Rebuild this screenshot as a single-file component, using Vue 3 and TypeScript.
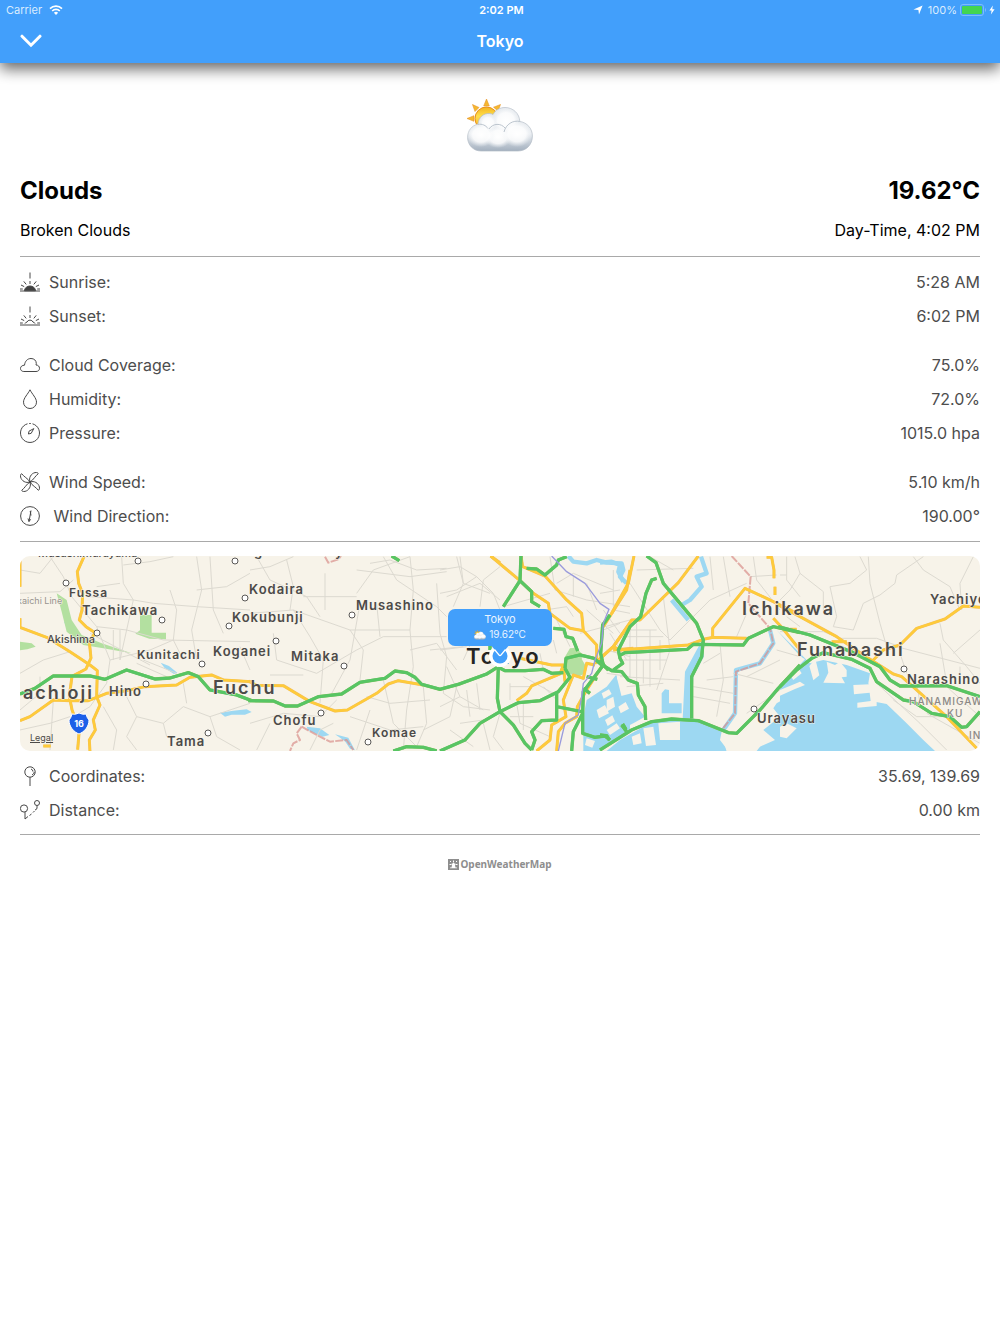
<script setup lang="ts">
interface Reading {
  icon: string
  label: string
  value: string
}

interface Tile {
  x: number
  y: number
  water?: string
  river?: string
  land?: string
  park?: string
  minor?: string
  border?: string
  major?: string
  highway?: string
  rail?: string
}

interface Place {
  name: string
  x: number
  y: number
  kind: 'city' | 'town' | 'village' | 'hamlet' | 'ward' | 'line' | 'capital'
}

const conditionGroups: Reading[][] = [
  [
    { icon: 'sunrise', label: 'Sunrise:', value: '5:28 AM' },
    { icon: 'sunset', label: 'Sunset:', value: '6:02 PM' },
  ],
  [
    { icon: 'cloud', label: 'Cloud Coverage:', value: '75.0%' },
    { icon: 'drop', label: 'Humidity:', value: '72.0%' },
    { icon: 'gauge', label: 'Pressure:', value: '1015.0 hpa' },
  ],
  [
    { icon: 'fan', label: 'Wind Speed:', value: '5.10 km/h' },
    { icon: 'compass', label: '\u00a0Wind Direction:', value: '190.00°' },
  ],
]

const locationGroups: Reading[][] = [
  [
    { icon: 'pin', label: 'Coordinates:', value: '35.69, 139.69' },
    { icon: 'route', label: 'Distance:', value: '0.00 km' },
  ],
]

// Tile geometry is drawn at three units per map pixel.
const tiles: Tile[] = [
  {
    x: 10,
    y: 550,
    water: 'M162 215l20 5 20 42-25-17zM452 338l25 10 25 20-10 4-28-18zM630 488l40-6 40-4 15 8-20 8-40 0-20 6z',
    park: 'M390 195h35v53h43v20l-50-2-42-15 14-10zM140 130l30 20 15 60 30 45 60 25 90 30-85-15-60-10-50-40-15-60zM30 275l35 5 12 10-25 8-22 3z',
    minor:
      'M30 130L150 125 190 90M120 20L160 80 185 140 260 230 300 330 290 400 240 470 190 500M30 60L90 70 130 20M335 20L340 100 370 150 350 240 330 330M340 45L420 35 490 20M370 150L430 160 560 170 720 180M480 120L500 180 490 270 520 330M560 20L575 120 545 240 560 330M600 20L610 180 640 250M240 140L370 150M260 230L350 240 460 270 720 275M30 370L100 330 180 305M300 330L420 300 490 270M310 240V330M330 240V330M240 250L420 345M380 340L470 380M400 330L500 370M350 440L380 500 460 520 520 470 600 500 720 460M280 470L320 540 310 600M380 500L350 560 380 600M460 520L470 560M600 500L620 560 690 600M30 480L90 430 90 380M30 540L120 520 180 500M130 450L120 600M520 400L530 460M690 290L720 360M260 110L330 100M720 70L650 110 560 120',
    major:
      'M222 20L202 65l4 35 12 30-2 50-8 30 20 20 27 18-17 28 5 48-15 33-42 22-8 60 8 40 22 60-5 60M30 205V232L110 262 180 305 240 345 262 362 260 440 270 465 250 510 256 540 238 570 240 605M30 20V110M30 512L60 500 130 450 180 452 235 452 290 430 350 422 405 410 500 405 540 382 605 375 640 390 725 395M100 588h22',
    highway: 'M30 432L75 415 130 378 240 378 285 388 350 360 435 387 480 384 535 368 565 380 600 420 680 435 725 452',
  },
  {
    x: 250,
    y: 550,
    water: 'M170 530l40 5 28 20-20 5-45-20zM255 553l40 10 20 38-15-5-15-22z',
    border: 'M155 530L140 550 150 570 130 580 120 603M155 530L200 555 240 575 290 570 310 600M225 20l10 18 30-10 8-10',
    minor:
      'M0 60L60 50 130 20M20 20L60 90 170 140 210 200M110 30L130 110 120 180M160 140H320M225 70V180M320 130L370 60 480 20M320 60L480 80 590 65M480 20L490 120 480 240 490 350 470 480 460 600M300 240L340 300 330 390M400 20L440 90 560 170 590 200M360 40L420 30 500 60 590 55M0 190L130 180 300 240 480 240M70 250L80 330 200 370 320 300 400 260 590 260M130 180L180 260 220 330 210 460M60 375H160M330 160L300 330 240 440M380 160L390 260M560 100L570 250 590 320 580 430M620 20L640 100 720 130M590 140L690 100 750 150M540 300L640 290M620 360L560 280 480 300M350 440L420 460 540 450M400 390L430 520 500 590M520 410L530 520 500 590M580 430L640 470 720 480M620 410L600 500 520 540M0 520L100 490 210 500 260 450M20 600L60 520M180 600L210 540 250 520M320 600L360 480M300 500L420 540 520 530M650 420L660 500M680 400L690 480M690 220L640 330',
    major: 'M-5 393L20 406 100 407 180 455 255 483 292 480 380 430 415 402 445 392 520 405M722 18L750 38',
    highway:
      'M-5 452L70 453 105 468 143 468 205 440 275 432 330 397 405 385 435 363 470 368 495 382 515 403 570 418 625 403 710 372 742 352M430 603L470 590 520 592 560 603M425 18L448 32',
  },
  {
    x: 440,
    y: 550,
    water: 'M528 375L535 400 545 440 535 460 570 450V545L520 575 480 603H430V500L440 450 500 410z',
    river: 'M385 18L400 35 440 40 470 30 500 38 545 40 550 60 540 80 560 100',
    land: 'M470 480l25-15 12 25-30 15zM500 540l30-20 10 15-30 20zM485 430l22-12 8 14-24 14zM440 565l25 8-8 20-22-8z',
    park: 'M375 320l15-25 18-2 22 22-5 12 12 20-5 25-20 10-38-18z',
    minor:
      'M0 60L60 50 110 80 160 130 180 180M0 130L50 120 110 80M60 20L70 100 40 170M180 50L130 90 120 170M190 170L330 130M330 20L345 120 440 150 570 170M250 190L380 170 400 200M350 100L400 70 520 120M400 80V140M440 100L470 180M520 60V170M345 200L390 290M420 250L570 210M510 250L560 330M500 300L570 320M0 300L80 290M20 350L60 440 130 480M0 470L60 440M60 520L130 510M210 400V450M210 410H270M230 460L240 520 330 560M250 460V540M210 500H280M250 380L340 430M300 310L310 360M340 270L350 310M30 540L100 590M130 520L150 600M180 490L160 560 190 600M310 410L350 450M500 370L570 380M520 180L570 190M440 180L520 250',
    major:
      'M152 18L240 92 280 130 325 160 330 190 390 235 430 242M243 18L248 50 315 78 380 150 425 190 430 242 470 285 470 340M240 325L335 345 370 345M230 452L260 430 275 408 360 372 370 345 375 395M465 345L440 340 430 385 400 375 370 450 378 500 335 525 330 570 290 603M485 350L440 420 412 470 410 500 375 520 355 545 350 603M570 60L560 120 490 230M465 340L520 290 570 220M520 300L580 295',
    highway:
      'M243 18L240 92 190 170M240 92L275 125 275 155 300 170M340 235L372 238 378 260 398 265 413 303M260 55L290 57 315 75 350 45 355 30 380 20M375 355L378 325 420 315 462 325 485 345M375 355L390 382 355 425 300 452 235 458 180 485 120 520 75 570 0 603M175 352L172 445 180 485 220 525 255 580 275 600M175 352L195 362 255 362 310 358 335 370 370 368M350 425L350 510 305 512 275 545 285 570 275 600M350 470L425 485M510 195L488 225 482 310 490 345 430 425 428 490 400 545 395 603M428 490V550L465 562 495 558 510 570M490 345L505 360M440 380L472 388M430 415l20 15M150 285v15M545 525l15 20',
    rail: 'M335 18L380 65 435 100 480 160 507 178 490 220 485 280 465 330 455 370 430 400 425 440 415 495 375 520 355 603',
  },
  {
    x: 600,
    y: 550,
    water:
      'M20 603L60 570 130 530 165 515 280 505 330 530 365 545 360 570 385 603zM248 508L255 365 290 300 312 262 312 320 280 380 275 508zM600 420L530 460 520 475 540 500 490 540 525 570 480 590 470 603H600zM30 410L50 375 55 440 95 430 110 470 135 500 100 520 60 540 20 560 0 580V450zM185 430l10-12 12 2v40l38 0v30h-60z',
    river: 'M0 38L35 35 60 45 55 65 70 95M303 20L320 70 290 80 305 110 270 150 245 165M215 150L265 210M510 240L520 280 480 340 408 360 405 490 370 540',
    land: 'M175 520l65-5v55h-60zM130 535l30-5 8 55-30 3zM20 450l20-10 5 30-25 15zM55 470l22-14 10 20-25 14zM95 560l25-10 5 30-25 5zM15 510l22-14 8 18-22 14zM370 570l15-10 15 15-8 30h-12zM400 560l20 40h20l-15-45z',
    border: 'M395 18L452 80 445 160 510 235 520 280 480 340 408 365 405 490 365 540',
    minor:
      'M110 60L280 55M90 100L180 240 210 270M70 240H170M70 260H190M70 330H200M90 230V400M110 220V400M130 330V400M150 240V410M180 270V360M60 380L240 390M80 410L190 400M190 140L210 300 170 420M210 270L330 150 440 100M330 20L340 120M370 20L390 140M450 80L530 75M440 190L410 260M360 280L370 390 350 500M280 410L400 430M280 440L390 460M400 370L520 400M440 380L540 330M460 20L470 90 540 180M560 20V90L600 140M220 60L150 20M310 340L360 310M320 390L400 380M440 490L540 420M0 130L60 120M10 240L60 220M10 180L60 250M560 200L600 230M530 300L600 320',
    major:
      'M102 18L85 100 35 190M295 18L235 98 120 210 95 210 40 290 0 325M60 300L265 285 310 268 340 262 440 265M338 262V235L435 115 500 145 580 185 600 190M500 22H515L522 60V85M525 110V135M520 205L548 235 600 300M40 290L60 300',
    highway:
      'M140 18L168 38 190 100 290 220 310 270 305 320 275 380 275 505M170 85L155 90 138 130 122 200 90 230 55 300 60 325 68 340 40 360M62 315L75 308 262 298 280 283 430 285 445 265 520 230 600 248M0 330L15 350 35 362 65 365 85 390 112 400 115 435 135 470 137 510M0 600L95 540 155 515 215 507 295 512 385 548 410 550 480 480 535 415 600 345M68 522l10 16M0 555L20 557 28 570',
  },
  {
    x: 780,
    y: 550,
    water: 'M-10 240L60 318 75 328 0 405V603H465L430 570 380 520 320 462 285 455 265 400 270 370 200 345 130 330 90 340z',
    land: 'M88 348l18-22 12 50-18 15zM140 335l25 10 15-10 20 25v20l-15 2 10 18-65-2 15-30zM220 405l50-2 20 20v45l-58 5v-15l40-5-3-25-47 5zM0 420l60-25 15 10-30 12-45 20zM0 530l20-10 30 15-30 30-20-5zM30 375l25-20 10 15-25 20z',
    minor:
      'M45 20L60 70 130 125V180M60 70L30 120 0 150M0 75H20M265 20L270 100 300 220 320 290M430 20L350 75 345 100 300 135 250 160 220 240M240 20L260 60 210 100 150 110 170 200 160 230 220 240M0 245H130L180 265 290 265 360 290M400 20L430 60 510 110 540 180M580 20L540 100 545 180M480 220L490 270 560 350 600 400M350 290L600 355M360 310L380 370M480 280L500 400M520 310L600 240M290 400L420 520 500 600M340 450L410 500 490 500M440 490L600 580M500 410L600 500M410 400L420 460M540 350V400',
    major:
      'M-5 165L60 200 170 260 250 315 340 372 365 380 500 500 590 595M155 275L200 275M280 330L310 300 360 285 410 235 495 207 550 168 600 172M30 238h20',
    highway:
      'M-5 230L90 255 220 308 300 350 330 390 360 408 500 407 600 440M0 410L50 360 95 325 130 308 215 328 270 355 290 395 370 450 400 455 455 490 510 500 545 532 560 530 600 485',
  },
]

const places: Place[] = [
  { name: 'Musashimurayama', x: 38, y: 557, kind: 'hamlet' },
  { name: 'g', x: 254, y: 556, kind: 'town' },
  { name: 'y', x: 335, y: 556, kind: 'town' },
  { name: 'Fussa', x: 69, y: 597, kind: 'village' },
  { name: 'kaichi Line', x: 17, y: 604, kind: 'line' },
  { name: 'Tachikawa', x: 82, y: 615, kind: 'town' },
  { name: 'Akishima', x: 47, y: 643, kind: 'hamlet' },
  { name: 'Kunitachi', x: 137, y: 659, kind: 'village' },
  { name: 'Koganei', x: 213, y: 656, kind: 'town' },
  { name: 'Hino', x: 109, y: 696, kind: 'town' },
  { name: 'achioji', x: 23, y: 699, kind: 'city' },
  { name: 'Fuchu', x: 213, y: 694, kind: 'city' },
  { name: 'Tama', x: 167, y: 746, kind: 'town' },
  { name: 'Kodaira', x: 249, y: 594, kind: 'town' },
  { name: 'Kokubunji', x: 232, y: 622, kind: 'town' },
  { name: 'Musashino', x: 356, y: 610, kind: 'town' },
  { name: 'Mitaka', x: 291, y: 661, kind: 'town' },
  { name: 'Chofu', x: 273, y: 725, kind: 'town' },
  { name: 'Komae', x: 372, y: 737, kind: 'village' },
  { name: 'Tokyo', x: 466, y: 664, kind: 'capital' },
  { name: 'Ichikawa', x: 742, y: 615, kind: 'city' },
  { name: 'Funabashi', x: 797, y: 656, kind: 'city' },
  { name: 'Yachiyo', x: 930, y: 604, kind: 'town' },
  { name: 'Narashino', x: 907, y: 684, kind: 'town' },
  { name: 'Urayasu', x: 757, y: 723, kind: 'town' },
  { name: 'HANAMIGAWA-', x: 909, y: 705, kind: 'ward' },
  { name: 'KU', x: 947, y: 717, kind: 'ward' },
  { name: 'INAGE', x: 969, y: 739, kind: 'ward' },
]

const stations: [number, number][] = [
  [66, 583], [162, 620], [97, 633], [202, 664], [146, 684], [208, 733],
  [138, 561], [235, 561], [245, 598], [229, 626], [276, 641], [352, 615],
  [344, 666], [321, 713], [368, 742], [754, 709], [904, 669],
]

const layers = ['water', 'river', 'land', 'park', 'minor', 'border', 'major', 'highway', 'rail'] as const
</script>

<template>
  <div class="screen">
    <header class="bar">
      <div class="status">
        <div class="status-side">
          <span>Carrier</span>
          <svg class="wifi" viewBox="0 0 14 10" aria-hidden="true">
            <path d="M1 3.6a8.6 8.6 0 0 1 12 0M3.2 6a5.4 5.4 0 0 1 7.6 0" fill="none" stroke="#fff" stroke-width="1.7" />
            <path d="M4.9 7.8a3 3 0 0 1 4.2 0L7 9.9z" fill="#fff" />
          </svg>
        </div>
        <time class="clock">2:02 PM</time>
        <div class="status-side end">
          <svg class="arrow" viewBox="0 0 10 10" aria-hidden="true">
            <path d="M9.6.4L6 9.4 5.4 4.9.5 4.5z" fill="#fff" />
          </svg>
          <span>100%</span>
          <svg class="battery" viewBox="0 0 26 12" aria-hidden="true">
            <rect x=".5" y=".5" width="23" height="11" rx="2.5" fill="none" stroke="#7dbdfc" />
            <rect x="2" y="2" width="20" height="8" rx="1" fill="#43d551" />
            <path d="M25 4v4q1-.5 1-2t-1-2z" fill="#7dbdfc" />
          </svg>
          <svg class="bolt" viewBox="0 0 6 10" aria-hidden="true">
            <path d="M3.8.4L.4 5.6h2.2L1.9 9.6 5.6 4.2H3.3z" fill="#fff" />
          </svg>
        </div>
      </div>
      <div class="nav">
        <button class="close" type="button" aria-label="Close">
          <svg viewBox="0 0 22 14" aria-hidden="true">
            <path d="M2 2.2l9 9 9-9" fill="none" stroke="#fff" stroke-width="3" stroke-linecap="round" />
          </svg>
        </button>
        <h1 class="title">Tokyo</h1>
        <span></span>
      </div>
    </header>

    <svg class="defs" width="0" height="0" aria-hidden="true">
      <defs>
        <linearGradient id="puff" x1="0" y1="0" x2="0" y2="1">
          <stop offset="0" stop-color="#e6eaee" />
          <stop offset=".6" stop-color="#e9edf1" />
          <stop offset="1" stop-color="#a3b0be" />
        </linearGradient>
        <radialGradient id="shine">
          <stop offset="0" stop-color="#fff" />
          <stop offset=".6" stop-color="#fff" stop-opacity=".8" />
          <stop offset="1" stop-color="#f0f3f6" stop-opacity="0" />
        </radialGradient>
        <linearGradient id="sun" x1="0" y1="0" x2="0" y2="1">
          <stop offset="0" stop-color="#f3b41f" />
          <stop offset=".4" stop-color="#ffe04d" />
          <stop offset="1" stop-color="#f5a623" />
        </linearGradient>
        <symbol id="partly-cloudy" viewBox="0 0 66 54">
          <path
            d="M19.5 0l2.8 7h-5.6zM5.5 5.5l6.500 3-4 4zM33.500 5.500l-2.500 6.500-4.500-3.800zM0 19.500l7-2.800v5.600z"
            fill="#f5b82e" stroke="#e7962c" stroke-width=".6"
          />
          <circle cx="19.5" cy="19.5" r="11.5" fill="url(#sun)" stroke="#e88f1c" stroke-width="1" />
          <path
            d="M14 52C6 52 .6 45.600.6 38.500c0-7 4.400-12.200 10.400-13.300C11.500 18 17 14 22.500 14.500c1.200 0 2.500.4 3.500 1C28.500 11 33 8.500 38 8.500c8 0 14.500 6 14.800 14C60 23.500 65.400 29.500 65.400 37c0 9-6.500 15-14.400 15z"
            fill="url(#puff)" stroke="#b3bcc6" stroke-width=".7"
          />
          <circle cx="39" cy="22" r="14" fill="url(#shine)" />
          <circle cx="21" cy="24" r="9" fill="url(#shine)" />
          <ellipse cx="31" cy="38" rx="14" ry="11" fill="url(#shine)" />
          <ellipse cx="14" cy="36" rx="14" ry="12" fill="url(#shine)" />
          <ellipse cx="50" cy="35" rx="15" ry="13" fill="url(#shine)" />
          <path d="M22 30c4-6 12-6 16-1M37 33c2-8 9-12 16-10.500M11 25.500c4-1 8 1 10 4" fill="none" stroke="#bcc5ce" stroke-width="1" />
        </symbol>
      </defs>
    </svg>

    <main class="content">
      <svg class="hero" role="img" aria-label="Partly cloudy"><use href="#partly-cloudy" /></svg>

      <div class="line headline">
        <h2>Clouds</h2>
        <strong>19.62°C</strong>
      </div>
      <div class="line summary">
        <span>Broken Clouds</span>
        <span>Day-Time, 4:02 PM</span>
      </div>

      <section class="readings" aria-label="Conditions">
        <dl v-for="(group, g) in conditionGroups" :key="g">
          <div v-for="row in group" :key="row.icon" class="line row">
            <dt>
              <svg class="icon" viewBox="0 0 20 20" aria-hidden="true">
                <template v-if="row.icon === 'sunrise' || row.icon === 'sunset'">
                  <path d="M10 .5v6M10 9v3M0 19h20M1 13l3.200 1.600M19 13l-3.200 1.600M3.800 9.400l2.400 3M16.200 9.400l-2.400 3M0 17h2.800M20 17h-2.800" />
                  <path v-if="row.icon === 'sunrise'" class="solid" d="M4.500 18.800a5.500 4.800 0 0 1 11 0z" />
                  <path v-else d="M5 17.600q.6-1.500 2-1.500.8-2 3-2t3 2q1.400 0 2 1.500" />
                </template>
                <path
                  v-else-if="row.icon === 'cloud'"
                  d="M3.800 16.500C1.800 16.500.5 15.200.5 13.500c0-1.900 1.600-3.300 4-3.300C5 6 7.600 3.500 11 3.500c3.200 0 5.300 2.100 5.300 5 0 .6-.1 1-.3 1.500 2.200 0 3.500 1.500 3.500 3.300 0 1.900-1.300 3.200-3.500 3.200z"
                />
                <path v-else-if="row.icon === 'drop'" d="M10 .8C8 5 3.500 9 3.500 13.200a6.500 6.300 0 0 0 13 0C16.500 9 12 5 10 .8z" />
                <template v-else-if="row.icon === 'gauge'">
                  <path d="M7.500.8a9.500 9.500 0 1 0 5 0M9.200.5h1.600" />
                  <path d="M13.800 5.600L9 8.200 8.400 11l2.800-.7z" />
                </template>
                <template v-else-if="row.icon === 'fan'">
                  <path d="M10 10C8.500 6 11 1.500 15 .6c2-.4 3.500.4 3.200 1.200C15.500 3.500 13.500 8 10 10z" />
                  <path d="M10 10c4-1.500 8.500 1 9.400 5 .4 2-.4 3.500-1.200 3.200C16.500 15.500 12 13.500 10 10z" />
                  <path d="M10 10c1.500 4-1 8.500-5 9.400-2 .4-3.500-.4-3.200-1.200C4.500 16.500 6.500 12 10 10z" />
                  <path d="M10 10C6 11.500 1.500 9 .6 5c-.4-2 .4-3.500 1.200-3.200C3.500 4.500 8 6.500 10 10z" />
                  <circle class="solid" cx="10" cy="10" r="1" />
                </template>
                <template v-else>
                  <circle cx="10" cy="10" r="9.4" />
                  <path d="M11 4.500L10 10l-1 5.500M8 12.500l1 3 1.700-2.200M10.200 5l.8 4.500" />
                </template>
              </svg>
              {{ row.label }}
            </dt>
            <dd>{{ row.value }}</dd>
          </div>
        </dl>
      </section>

      <section class="map" aria-label="Map of Tokyo">
        <svg class="chart" viewBox="20 556 960 195" preserveAspectRatio="xMidYMid slice">
          <g v-for="layer in layers" :key="layer" :class="layer">
            <g v-for="tile in tiles" :key="tile.x" :transform="`translate(${tile.x} ${tile.y}) scale(.3333)`">
              <path v-if="layer === 'major' || layer === 'highway'" class="casing" :d="tile[layer] || ''" />
              <path :d="tile[layer] || ''" />
            </g>
          </g>
          <circle v-for="([x, y], i) in stations" :key="i" class="station" :cx="x" :cy="y" r="3" />
          <path
            d="M72 714q3 1 7-1 4 2 7 1 1 4 3 6c0 7-5 12-10 14-5-2-10-7-10-14q2-2 3-6z"
            fill="#1c5fe8" stroke="#fff" stroke-width="1"
          />
          <text class="shield" x="79" y="727" text-anchor="middle">16</text>
          <text v-for="place in places" :key="place.name + place.x" :class="place.kind" :x="place.x" :y="place.y">{{ place.name }}</text>
        </svg>
        <a class="legal" href="#legal">Legal</a>
        <div class="marker">
          <div class="callout">
            <span>Tokyo</span>
            <span class="callout-temp">
              <svg class="mini" aria-hidden="true"><use href="#partly-cloudy" /></svg>
              19.62°C
            </span>
          </div>
          <svg class="dot" viewBox="0 0 24 24" aria-hidden="true">
            <circle cx="12" cy="12" r="11" fill="#fff" />
            <circle cx="12" cy="12" r="7.5" fill="#429ffb" />
            <path d="M2 0h20l-9 11q-1 1-2 0z" fill="#429ffb" />
            <path d="M6.500 5.500L11 11q1 1 2 0l4.500-5.500" fill="none" stroke="#fff" stroke-width="1.2" />
          </svg>
        </div>
      </section>

      <section class="readings place" aria-label="Location">
        <dl v-for="(group, g) in locationGroups" :key="g">
          <div v-for="row in group" :key="row.icon" class="line row">
            <dt>
              <svg class="icon" viewBox="0 0 20 20" aria-hidden="true">
                <template v-if="row.icon === 'pin'">
                  <circle cx="10" cy="6" r="5.2" />
                  <path d="M10 11.200V20M11 3q2 .6 2 2.600M12 9q2-1 2.300-3" />
                </template>
                <template v-else>
                  <circle cx="4" cy="8.5" r="3.6" />
                  <circle cx="17" cy="3" r="2.5" />
                  <path d="M5 12v7M17 5.500V8q0 1.500-2 2M5 19l3-2.500M9.500 15.500l2-1.500M13 12.500l1.500-1.500" />
                </template>
              </svg>
              {{ row.label }}
            </dt>
            <dd>{{ row.value }}</dd>
          </div>
        </dl>
      </section>

      <footer class="credit">
        <a href="#openweathermap">
          <svg viewBox="0 0 11 11" aria-hidden="true">
            <rect width="11" height="11" fill="#8e8e8e" />
            <path d="M2 2h1v1H2zM8 2h1v1H8zM5 1.500h1V3H5zM1.500 5H3v1H1.500zM8 5h1.500v1H8zM5.500 3.300l1 1.300 1.500.4-1 1.300.5 2.200H3.500L4 6.300 3 5l1.500-.4zM2 8.500h7v.8H2z" fill="#fff" />
          </svg>
          OpenWeatherMap
        </a>
      </footer>
    </main>
  </div>
</template>

<style>
body {
  margin: 0;
  background: #fff;
}
</style>

<style scoped>
.screen {
  min-height: 100vh;
  background: #fff;
  color: #000;
  font-family: Inter, "Liberation Sans", sans-serif;
  font-size: 16px;
  line-height: 20px;
}

.defs {
  position: absolute;
}

.bar {
  position: relative;
  background: #429ffb;
  color: #fff;
  box-shadow: 0 6px 14px rgba(0, 0, 0, 0.6);
}

.status {
  display: grid;
  grid-template-columns: 1fr auto 1fr;
  align-items: center;
  height: 20px;
  padding: 0 5px 0 6px;
  font-size: 11px;
}

.status-side {
  display: flex;
  align-items: center;
  gap: 7px;
  color: #d9ecfe;
}

.end {
  justify-content: flex-end;
  gap: 3px;
}

.clock {
  padding-left: 2px;
  font-weight: 600;
}

.wifi {
  width: 14px;
  height: 10px;
}

.arrow {
  width: 10px;
  height: 10px;
  margin-right: 2px;
}

.battery {
  width: 26px;
  height: 12px;
}

.bolt {
  width: 6px;
  height: 10px;
}

.nav {
  display: grid;
  grid-template-columns: 1fr auto 1fr;
  align-items: center;
  height: 42px;
  padding: 0 20px 1px;
}

.close {
  justify-self: start;
  display: flex;
  padding: 0;
  border: 0;
  background: none;
  cursor: pointer;
}

.close svg {
  width: 22px;
  height: 14px;
}

.title {
  margin: 0;
  font-size: 16px;
  font-weight: 600;
}

.content {
  display: flex;
  flex-direction: column;
  padding: 36px 20px 20px;
}

.hero {
  align-self: center;
  width: 66px;
  height: 54px;
}

.line {
  display: flex;
  align-items: center;
  justify-content: space-between;
}

.headline {
  margin-top: 23px;
  font-size: 24px;
  line-height: 30px;
}

.headline h2,
.headline strong {
  margin: 0;
  font-size: inherit;
  font-weight: 700;
}

.summary {
  padding: 14px 0 16px;
}

.readings {
  display: flex;
  flex-direction: column;
  gap: 15px;
  padding: 8px 0;
  border-top: 1px solid #a9a9a9;
  border-bottom: 1px solid #a9a9a9;
  color: #4d4d4d;
}

.place {
  border-top: 0;
  padding-bottom: 7px;
}

.readings dl,
.readings dd {
  margin: 0;
}

.row {
  height: 34px;
}

.row dt {
  display: flex;
  align-items: center;
  gap: 9px;
}

.icon {
  width: 20px;
  height: 20px;
  fill: none;
  stroke: #484848;
  stroke-width: 1;
}

.icon .solid {
  fill: #404040;
}

.map {
  position: relative;
  height: 195px;
  margin-top: 14px;
  overflow: hidden;
  border-radius: 10px;
  background: #f7f3e9;
}

.chart {
  display: block;
  width: 100%;
  height: 100%;
}

.chart path {
  stroke-linejoin: round;
}

.water {
  fill: #9dd8f2;
}

.river {
  fill: none;
  stroke: #9dd8f2;
  stroke-width: 13;
}

.land {
  fill: #f7f3e9;
}

.park {
  fill: #b3e0a0;
}

.minor {
  fill: none;
  stroke: #dcd9d0;
  stroke-width: 3;
}

.border {
  fill: none;
  stroke: #d98f8a;
  stroke-opacity: 0.7;
  stroke-width: 6;
  stroke-dasharray: 24 4;
}

.major {
  fill: none;
  stroke: #fecb3a;
  stroke-width: 7;
}

.major .casing {
  stroke: #f3bd5c;
  stroke-width: 9;
}

.highway {
  fill: none;
  stroke: #57c564;
  stroke-width: 9;
}

.highway .casing {
  stroke: #7fbf58;
  stroke-width: 10;
}

.rail {
  fill: none;
  stroke: #9a9bdc;
  stroke-width: 4;
}

.station {
  fill: #fff;
  stroke: #5a5856;
  stroke-width: 1;
}

.chart text {
  fill: #4c4a48;
  stroke: #f7f3e9;
  stroke-width: 1px;
  stroke-linejoin: round;
  paint-order: stroke;
  font-weight: 600;
}

.chart .capital {
  fill: #262524;
  font-size: 22px;
  letter-spacing: 2px;
}

.chart .city {
  font-size: 18px;
  letter-spacing: 2px;
}

.chart .town {
  font-size: 13px;
  letter-spacing: 1px;
}

.chart .village {
  font-size: 12px;
  letter-spacing: 1px;
}

.chart .hamlet {
  font-size: 11px;
  font-weight: 500;
}

.chart .ward {
  fill: #8b8885;
  font-size: 10px;
  font-weight: 500;
  letter-spacing: 1px;
}

.chart .line {
  fill: #97938f;
  font-size: 9px;
  font-weight: 400;
}

.chart .shield {
  fill: #fff;
  stroke: none;
  font-size: 9px;
  font-weight: 700;
}

.legal {
  position: absolute;
  left: 10px;
  bottom: 7px;
  color: #4c4a48;
  font-size: 9px;
  line-height: 12px;
}

.marker {
  position: absolute;
  top: 53px;
  left: 50%;
  display: flex;
  flex-direction: column;
  align-items: center;
  transform: translateX(-50%);
}

.callout {
  display: flex;
  flex-direction: column;
  align-items: center;
  box-sizing: border-box;
  width: 104px;
  padding: 3px 0 4px;
  border-radius: 7px;
  background: #429ffb;
  color: #e9f4ff;
  font-size: 11px;
  line-height: 15px;
}

.callout-temp {
  display: flex;
  align-items: center;
  gap: 3px;
  font-size: 10px;
}

.mini {
  width: 12px;
  height: 10px;
}

.dot {
  width: 24px;
  height: 24px;
  margin-top: -2px;
}

.credit {
  display: flex;
  justify-content: center;
  margin-top: 21px;
}

.credit a {
  display: flex;
  align-items: center;
  gap: 1px;
  color: #8e8e8e;
  font-family: "Noto Sans", "Open Sans", sans-serif;
  font-size: 10px;
  font-weight: 700;
  line-height: 16px;
  text-decoration: none;
}

.credit svg {
  width: 11px;
  height: 11px;
}
</style>
